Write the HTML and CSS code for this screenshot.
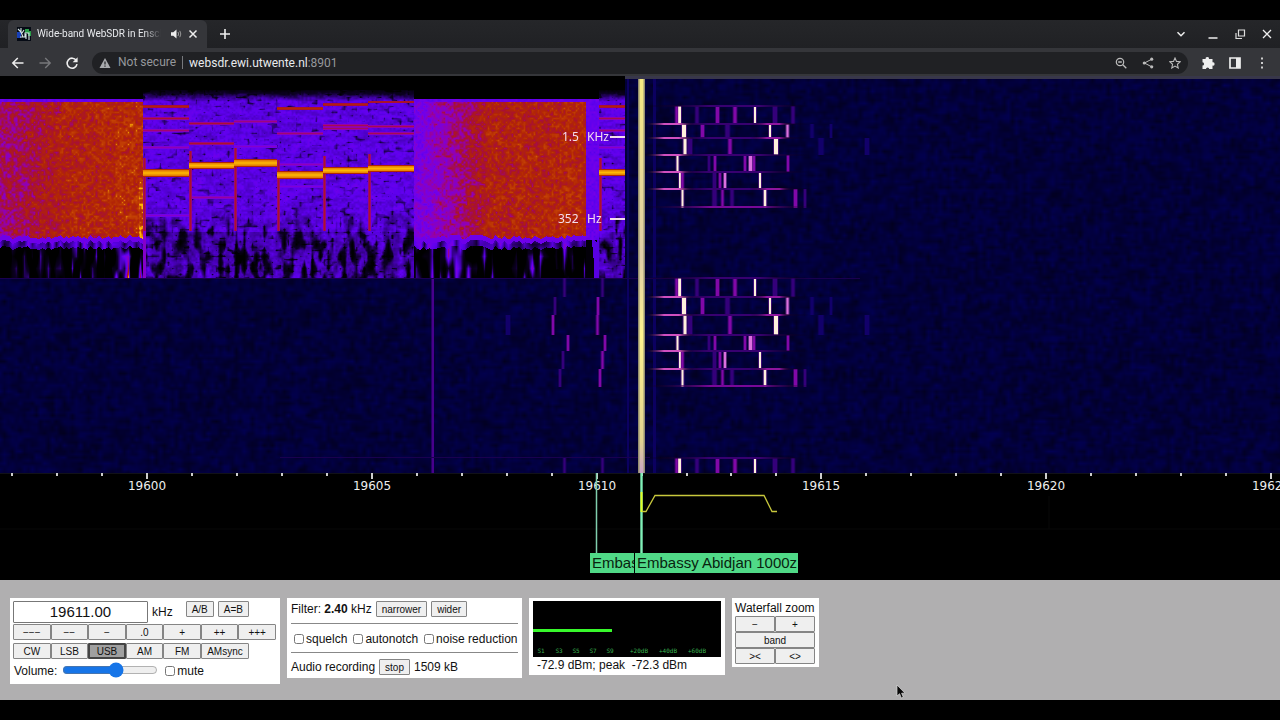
FILE: index.html
```html
<!DOCTYPE html>
<html lang="en">
<head>
<meta charset="utf-8">
<title>Wide-band WebSDR in Enschede</title>
<link rel="stylesheet" href="styles.css">
</head>
<body>
<header class="browser">
  <div class="tabstrip">
    <div class="tab">
      <svg class="favicon" width="14" height="14" viewBox="0 0 14 14"><rect width="14" height="14" fill="#050a14"/><path d="M8 2h4v2h2v5h-3V6H8z" fill="#28a048"/><path d="M0 5h4v6H0z" fill="#1840b8"/><path d="M1 2l3 3 2 5M4 1v5M7 3L5 6M3 10h5V6h4v7M9 7v5" fill="none" stroke="#d8e8e8" stroke-width="1.1"/></svg>
      <span class="tab-title">Wide-band WebSDR in Enschede, the Netherlands</span>
      <svg class="tab-audio" width="12" height="12" viewBox="0 0 12 12"><path d="M1 4.200h2.300L6.500 1.500v9L3.300 7.800H1z" fill="#eee"/><path d="M8 4q1.300 2 0 4M9.800 2.800q2 3.200 0 6.400" fill="none" stroke="#999"/></svg>
      <button class="icon-button" aria-label="Close tab"><svg width="10" height="10" viewBox="0 0 10 10"><path d="M1.500 1.500l7 7m0-7l-7 7" stroke="#eee" stroke-width="1.500"/></svg></button>
    </div>
    <button class="icon-button" aria-label="New tab"><svg width="12" height="12" viewBox="0 0 12 12"><path d="M6 1v10M1 6h10" stroke="#eee" stroke-width="1.600"/></svg></button>
    <div class="window-buttons">
      <button class="icon-button" aria-label="Search tabs"><svg width="12" height="12" viewBox="0 0 12 12"><path d="M2.500 4.200L6 7.700l3.500-3.500" fill="none" stroke="#eee" stroke-width="1.500"/></svg></button>
      <button class="icon-button" aria-label="Minimize"><svg width="12" height="12" viewBox="0 0 12 12"><path d="M1.500 10h9" stroke="#eee" stroke-width="1.500"/></svg></button>
      <button class="icon-button" aria-label="Restore"><svg width="12" height="12" viewBox="0 0 12 12"><path d="M4.500 2h6v6h-6zM2 5v5.500h6" fill="none" stroke="#ddd" stroke-width="1.200"/></svg></button>
      <button class="icon-button" aria-label="Close"><svg width="12" height="12" viewBox="0 0 12 12"><path d="M2 2l8 8m0-8l-8 8" stroke="#eee" stroke-width="1.300"/></svg></button>
    </div>
  </div>
  <div class="toolbar">
    <button class="icon-button" aria-label="Back"><svg width="14" height="14" viewBox="0 0 14 14"><path d="M12.500 7H2M6.800 2L1.800 7l5 5" fill="none" stroke="#eee" stroke-width="1.500"/></svg></button>
    <button class="icon-button" aria-label="Forward"><svg width="14" height="14" viewBox="0 0 14 14"><path d="M1.500 7H12M7.200 2l5 5-5 5" fill="none" stroke="#77787b" stroke-width="1.400"/></svg></button>
    <button class="icon-button" aria-label="Reload"><svg width="14" height="14" viewBox="0 0 14 14"><path d="M11.200 4.300A5 5 0 1 0 12 8.200" fill="none" stroke="#eee" stroke-width="1.600"/><path d="M12.600 1.200v5H7.600z" fill="#eee"/></svg></button>
    <div class="omnibox">
      <svg width="12" height="12" viewBox="0 0 12 12"><path d="M6 1l5.500 10H.5z" fill="#a8aaad"/><path d="M6 4.500v3M6 8.500v1.200" stroke="#202124" stroke-width="1.200"/></svg>
      <span class="insecure">Not secure</span>
      <span class="url">websdr.ewi.utwente.nl<span class="port">:8901</span></span>
      <div class="page-actions">
        <button class="icon-button" aria-label="Zoom"><svg width="12" height="12" viewBox="0 0 12 12"><circle cx="5" cy="5" r="3.700" fill="none" stroke="#bbb" stroke-width="1.200"/><path d="M3.200 5h3.600M7.800 7.800l3.500 3.500" stroke="#bbb" stroke-width="1.300"/></svg></button>
        <button class="icon-button" aria-label="Share"><svg width="12" height="12" viewBox="0 0 12 12"><path d="M10 2L2.500 6 10 10" fill="none" stroke="#bbb"/><circle cx="9.700" cy="2.200" r="1.600" fill="#bbb"/><circle cx="2.300" cy="6" r="1.600" fill="#bbb"/><circle cx="9.700" cy="9.800" r="1.600" fill="#bbb"/></svg></button>
        <button class="icon-button" aria-label="Bookmark"><svg width="12" height="12" viewBox="0 0 12 12"><path d="M6 1l1.500 3.400 3.700.4-2.800 2.500.8 3.700L6 9.100 2.800 11l.8-3.700L.8 4.800l3.700-.4z" fill="none" stroke="#bbb" stroke-width="1.100"/></svg></button>
      </div>
    </div>
    <div class="extensions">
      <button class="icon-button" aria-label="Extensions"><svg width="14" height="14" viewBox="0 0 14 14"><path d="M1.500 3h3.200a1.700 1.700 0 1 1 3.300 0h3.500v3.300a1.700 1.700 0 1 1 0 3.300V13H8.200a1.600 1.600 0 0 0-3.200 0H1.500V9.500a1.600 1.600 0 0 0 0-3.200z" fill="#eee"/></svg></button>
      <button class="icon-button" aria-label="Side panel"><svg width="14" height="14" viewBox="0 0 14 14"><path d="M2 2h10v10H2z" fill="none" stroke="#eee" stroke-width="1.700"/><path d="M8 2h4v10H8z" fill="#eee"/></svg></button>
      <button class="icon-button" aria-label="Menu"><svg width="14" height="14" viewBox="0 0 14 14"><path d="M6 1.500h2v2H6zM6 6h2v2H6zM6 10.500h2v2H6z" fill="#ccc"/></svg></button>
    </div>
  </div>
</header>

<main class="page">
  <section class="waterfall-area">
    <canvas id="waterfall" class="waterfall" height="394"></canvas>
    <div class="spectrogram">
      <canvas id="spectrogram" width="625" height="202"></canvas>
      <div class="marker marker-high"><span>1.5</span><span>KHz</span><i class="dash"></i></div>
      <div class="marker marker-low"><span>352</span><span>Hz</span><i class="dash"></i></div>
    </div>
  </section>

  <section class="scale-area">
    <svg class="scale" width="100%" height="107">
      <path d="M0 .5H4000" stroke="#111118"/>
      <path d="M0 56H4000M1049 23V56" stroke="#090909"/>
      <g id="ticks" stroke="#ccc" stroke-width="2"></g>
      <g id="tick-labels" class="tick-labels"></g>
      <path d="M596.500 0V80" stroke="#80cfae" stroke-width="1.500"/>
      <path d="M641.500 0V80" stroke="#80f0b8" stroke-width="2.400"/>
      <path d="M641.500 19V39" stroke="#e4ff20" stroke-width="2"/>
      <path d="M642 38.500H646L655 22.500H764L772 38.500H777" fill="none" stroke="#c8c83c" stroke-width="1.300"/>
    </svg>
    <a class="station station-first" href="#a">Embas</a>
    <a class="station station-second" href="#b">Embassy Abidjan 1000z</a>
  </section>

  <section class="controls">
    <form class="panel tuning">
      <div class="row freq-row">
        <input id="freq" class="freq" type="text" value="19611.00" aria-label="Frequency">
        <label class="unit" for="freq">kHz</label>
        <button class="btn" type="button">A/B</button>
        <button class="btn" type="button">A=B</button>
      </div>
      <div class="step-row">
        <button class="btn" type="button">−−−</button><button class="btn" type="button">−−</button><button class="btn" type="button">−</button><button class="btn" type="button">.0</button><button class="btn" type="button">+</button><button class="btn" type="button">++</button><button class="btn" type="button">+++</button>
      </div>
      <div class="mode-row">
        <button class="btn" type="button">CW</button><button class="btn" type="button">LSB</button><button class="btn active" type="button">USB</button><button class="btn" type="button">AM</button><button class="btn" type="button">FM</button><button class="btn" type="button">AMsync</button>
      </div>
      <div class="row volume-row">
        <label for="volume">Volume:</label>
        <input id="volume" class="volume" type="range" min="0" max="100" value="57">
        <label class="check"><input type="checkbox">mute</label>
      </div>
    </form>

    <form class="panel filter">
      <div class="row"><span>Filter: <b>2.40</b> kHz</span><button class="btn" type="button">narrower</button><button class="btn" type="button">wider</button></div>
      <hr>
      <div class="row checks">
        <label class="check"><input type="checkbox">squelch</label>
        <label class="check"><input type="checkbox">autonotch</label>
        <label class="check"><input type="checkbox">noise reduction</label>
      </div>
      <hr>
      <div class="row"><span>Audio recording</span><button class="btn" type="button">stop</button><span>1509 kB</span></div>
    </form>

    <div class="panel meter">
      <svg class="meter-scale" viewBox="0 0 188 56">
        <rect width="188" height="56" fill="#000"/>
        <rect y="28" width="79" height="3" fill="#38f82c"/>
        <g class="meter-labels"><text x="8" y="52">S1</text><text x="26" y="52">S3</text><text x="43" y="52">S5</text><text x="60" y="52">S7</text><text x="77" y="52">S9</text><text x="106" y="52">+20dB</text><text x="135" y="52">+40dB</text><text x="164" y="52">+60dB</text></g>
      </svg>
      <div class="reading">-72.9 dBm; peak &nbsp;-72.3 dBm</div>
    </div>

    <div class="panel zoom">
      <div class="zoom-title">Waterfall zoom</div>
      <div class="zoom-grid">
        <button class="btn" type="button">−</button><button class="btn" type="button">+</button>
        <button class="btn wide" type="button">band</button>
        <button class="btn" type="button">&gt;&lt;</button><button class="btn" type="button">&lt;&gt;</button>
      </div>
    </div>
    <svg class="pointer" width="10" height="15" viewBox="0 0 10 15"><path d="M1 1v11l2.600-2.300L5.300 14l2-.8-1.700-4H9z" fill="#080808" stroke="#ddd" stroke-width=".7"/></svg>
  </section>
</main>
<script src="main.js"></script>
</body>
</html>
```
FILE: styles.css
```css
* { box-sizing: border-box; }
body {
  margin: 0;
  min-height: 100vh;
  padding: 20px 0;
  display: flex;
  flex-direction: column;
  background: #000;
  color: #111;
  font: 12px/16px "Liberation Sans", Arial, sans-serif;
}
button, input { font: inherit; color: inherit; margin: 0; }
svg, canvas { display: block; }

.browser { background: #35363a; font-family: Roboto, sans-serif; }
.icon-button { display: flex; padding: 0; border: 0; background: none; }
.tabstrip {
  display: flex;
  align-items: center;
  height: 28px;
  padding-right: 7px;
  background: linear-gradient(#252629, #202124);
}
.tab {
  display: flex;
  align-items: center;
  width: 199px;
  height: 28px;
  margin: 0 12px 0 8px;
  padding: 0 9px;
  border-radius: 6px 6px 0 0;
  background: #35363a;
}
.favicon { flex: none; margin-right: 6px; }
.tab-title {
  width: 124px;
  overflow: hidden;
  white-space: nowrap;
  color: #e8eaed;
  font-size: 10px;
  -webkit-mask-image: linear-gradient(90deg, #000 86%, transparent);
  mask-image: linear-gradient(90deg, #000 86%, transparent);
}
.tab-audio { margin: 0 6px 0 9px; flex: none; }
.window-buttons { display: flex; gap: 18px; margin-left: auto; }
.window-buttons .icon-button:nth-child(1) { margin-right: 2px; }
.window-buttons .icon-button:nth-child(n+3) { margin-left: -3px; }
.toolbar {
  display: flex;
  align-items: center;
  gap: 13px;
  height: 28px;
  padding: 1px 11px 0;
}
.omnibox {
  display: flex;
  align-items: center;
  flex: 1;
  height: 22px;
  padding: 0 7px;
  border-radius: 11px;
  background: #202124;
  font-size: 12px;
}
.insecure {
  margin: 0 6px 0 7px;
  padding-right: 6px;
  border-right: 1px solid #77797d;
  color: #96989c;
  line-height: 13px;
}
.url { color: #e8eaed; }
.port { color: #96989c; }
.page-actions { display: flex; gap: 15px; margin-left: auto; }
.extensions { display: flex; gap: 13px; }

.page { flex: 1; display: flex; flex-direction: column; }
.waterfall-area { position: relative; border-top: 3px solid #38374a; background: #020034; }
.waterfall { width: 100%; height: 394px; }
.spectrogram { position: absolute; left: 0; top: -3px; }
.marker {
  position: absolute;
  right: 0;
  display: flex;
  align-items: center;
  color: #f4dcec;
  font: 12px/16px "Noto Sans", sans-serif;
}
.marker span:first-child { width: 25px; }
.marker span:nth-child(2) { width: 23px; }
.marker-low span:first-child { width: 29px; }
.marker-high { top: 53px; }
.marker-low { top: 135px; }
.dash { width: 15px; height: 2px; background: #f4dcec; }

.scale-area { position: relative; overflow: hidden; background: #000; }
.tick-labels { fill: #eee; font: 12px "DejaVu Sans", sans-serif; text-anchor: middle; }
.station {
  position: absolute;
  top: 80px;
  height: 20px;
  padding: 0 1px 0 2px;
  overflow: hidden;
  background: #50d987;
  color: #08240f;
  font-size: 15px;
  line-height: 20px;
  text-decoration: none;
  white-space: nowrap;
}
.station-first { left: 590px; width: 44px; }
.station-second { left: 635px; }

.controls {
  position: relative;
  flex: 1;
  display: flex;
  flex-wrap: wrap;
  align-items: flex-start;
  align-content: flex-start;
  gap: 7px;
  padding: 18px 10px 10px;
  background: #b0afb0;
}
.panel { padding: 3px; background: #fff; }
.row { display: flex; align-items: center; }
.btn {
  height: 16px;
  padding: 0 5px;
  border: 1px solid #858585;
  border-radius: 1px;
  background: #efefef;
  font-size: 10px;
  line-height: 13px;
}
.btn.active { background: #a0a0a0; border: 2px solid #444; line-height: 11px; padding: 0; }
.tuning { width: 270px; }
.freq-row { align-items: flex-start; gap: 4px; height: 23px; }
.freq {
  width: 135px;
  height: 22px;
  padding: 0 0 1px;
  border: 1px solid #777;
  border-radius: 1px;
  font-size: 15px;
  text-align: center;
}
.unit { margin: 3px 9px 0 0; }
.step-row { display: grid; grid-template-columns: repeat(7, 1fr); margin-right: 1px; }
.mode-row { display: grid; grid-template-columns: repeat(5, 1fr) 48px; margin: 3px 28px 0 0; }
.step-row .btn, .mode-row .btn { padding: 0; }
.volume-row { height: 22px; padding: 1px 0 0 1px; }
.volume { width: 96px; height: 12px; margin: 0 7px 1px 5px; accent-color: #1675e8; }
.check { display: flex; align-items: center; gap: 2px; white-space: nowrap; }
.check input { width: 10px; height: 10px; }

.filter { width: 235px; padding: 3px 4px; }
.filter .row { gap: 4px; height: 16px; }
.filter .checks { gap: 6px; height: 22px; padding-left: 3px; }
.filter hr { height: 1px; margin: 6px 0 4px; border: 0; background: #888; }
.filter .checks + hr { margin: 2px 0 6px; }

.meter { width: 196px; padding: 3px 4px 2px; }
.meter-scale { width: 188px; }
.meter-labels { fill: #38b050; font: 6px "DejaVu Sans Mono", monospace; text-anchor: middle; }
.reading { padding: 0 4px; white-space: nowrap; }

.zoom { width: 87px; padding: 3px; }
.zoom-title { white-space: nowrap; line-height: 15px; }
.zoom-grid { display: grid; grid-template-columns: 1fr 1fr; padding-right: 1px; }
.wide { grid-column: span 2; }
.pointer { position: absolute; left: 896px; top: 104px; }
```
FILE: main.js
```js
// Repeatable hash noise in 0..1.
function hash(x, y, s) {
  let h = Math.imul(x, 374761393) ^ Math.imul(y, 668265263) ^ Math.imul(s, 1442695041);
  h = Math.imul(h ^ (h >>> 13), 1274126177);
  h = Math.imul(h ^ (h >>> 15), 2246822519);
  return ((h ^ (h >>> 16)) >>> 0) / 4294967295;
}
// Smooth noise with separate grain width and height.
function grain(x, y, w, h, s) {
  const gx = x / w, gy = y / h, ix = Math.floor(gx), iy = Math.floor(gy);
  const fx = gx - ix, fy = gy - iy;
  const a = hash(ix, iy, s), b = hash(ix + 1, iy, s), c = hash(ix, iy + 1, s), d = hash(ix + 1, iy + 1, s);
  return (a + (b - a) * fx) * (1 - fy) + (c + (d - c) * fx) * fy;
}
const clamp = v => Math.max(0, Math.min(1, v));

const stops = [[0, 0, 0, 0], [.2, 12, 0, 36], [.4, 66, 0, 170], [.52, 94, 0, 238], [.6, 116, 0, 232],
  [.7, 148, 0, 172], [.78, 168, 16, 50], [.86, 178, 38, 4], [.94, 196, 66, 4], [1, 255, 184, 4]];
function colour(v) {
  v = clamp(v);
  let i = 1;
  while (stops[i][0] < v) i++;
  const a = stops[i - 1], b = stops[i], t = (v - a[0]) / (b[0] - a[0]);
  return [1, 2, 3].map(k => a[k] + (b[k] - a[k]) * t);
}

// Tone bursts: start, end, tone height, fainter harmonics above and below.
const tones = [
  [143, 189, 96.500, [[30, .84], [42, .78], [54, .74], [71, .69], [139, .65]]],
  [189, 234, 89, [[47, .78], [67, .79], [121, .71]]],
  [234, 277, 86.500, [[45, .73], [70, .65]]],
  [277, 323, 98.500, [[32, .86], [57, .74], [88, .68], [110, .63]]],
  [323, 368, 94, [[28, .84], [49, .76], [52, .75]]],
  [368, 414, 92, [[25.500, .82], [50, .76], [57, .76]]],
  [599, 625, 96, [[30, .84], [42, .76], [54, .74], [71, .67]]]
];

function level(x, y) {
  const fine = grain(x, y, 2, 2, 1) - .5;
  const streak = grain(x, y, 4, 12, 2);
  const long = grain(x, y, 4, 40, 3);
  const tone = tones.find(t => x >= t[0] && x < t[1]);
  if (tone) {
    const top = 19;
    if (y < top - 5) return 0;
    let v = .5 + fine * .08 + (grain(x, y, 8, 3, 6) - .5) * .1;
    if (y < top + 6) v -= (top + 6 - y) * .038;
    v -= Math.max(0, grain(x, y, 4, 3, 7) - .68) * .75;
    if (y > 130) v -= Math.min(1, (y - 130) / 40) * Math.max(0, streak * .9 - .38);
    if (y > 155) v -= (1 - long) * .14;
    for (const h of tone[3]) {
      const d = Math.abs(y - h[0]);
      if (d < 1.5) v = Math.max(v, h[1] - d * .06);
    }
    const edge = x - tone[0];
    if (edge < 3 && y > tone[2] - 15 && y < 155) v = Math.max(v, .79 - Math.abs(edge - 1) * .05);
    if (x < 146 && y > 140) v = Math.max(v, .65);
    const dist = Math.abs(y - tone[2]);
    if (dist < 2.6) v = 1 - dist * .012;
    else if (dist < 4) v = .86;
    return v;
  }
  if (x >= 586 && y > 24) return y < 164 ? .55 + fine * .1 : (x > 587 && long > .45 ? .5 : .05);
  const first = x < 143;
  if (y < 23) return 0;
  if (y < 26) return .56 + fine * .1;
  const limit = 163 + grain(x, 0, 3, 1, 9) * 5;
  if (y < limit) {
    const t = first ? x / 143 : (x - 414) / 172;
    let v = first ? .73 + .12 * Math.min(1, t * 2) : .59 + .25 * Math.min(1, t * 2.2);
    v += fine * .14 + (grain(x, y, 4, 4, 8) - .5) * .1;
    if (t > .8) v += .02;
    if (first && x > 138 && y > 105) v += .06;
    if (y > limit - 5) v = .58;
    return v;
  }
  return y < limit + 6 ? .45 * streak + .2 : clamp((streak * .5 + long * .7 - .6) * 1.5 * (first ? .5 + x / 180 : 1));
}

function drawSpectrogram() {
  const c = document.getElementById("spectrogram"), g = c.getContext("2d");
  const im = g.createImageData(c.width, c.height);
  for (let y = 0, i = 0; y < c.height; y++) for (let x = 0; x < c.width; x++, i += 4) {
    const p = colour(level(x, y));
    im.data[i] = p[0]; im.data[i + 1] = p[1]; im.data[i + 2] = p[2]; im.data[i + 3] = 255;
  }
  g.putImageData(im, 0, 0);
}

// Signal traces of each burst: centre, width, brightness class.
const shades = { w: "#fff0dc", p: "#dc70df", m: "#8108a8", d: "#34007a", b: "#12006a" };
const traces = [
  [[679.500, 3, "w"], [676.500, 2, "m"], [697, 3, "d"], [717.500, 3, "m"], [735, 3, "m"], [755, 2, "w"], [775, 4, "d"], [793, 3, "d"], [564.500, 2, "d"], [602.500, 2, "d"]],
  [[684, 4, "w"], [702.500, 3, "m"], [727.500, 4, "d"], [770, 2, "w"], [787.500, 2, "p"], [812, 3, "b"], [831, 2, "b"], [555, 2, "d"], [598, 2, "m"]],
  [[685, 3, "w"], [690, 4, "d"], [730, 3, "m"], [776, 4, "w"], [821, 5, "b"], [867, 4, "b"], [508, 4, "b"], [553, 2, "m"], [597.500, 2, "m"]],
  [[677.500, 2, "w"], [709, 2, "d"], [715, 2, "m"], [745, 2, "m"], [750.500, 3, "p"], [754, 2, "m"], [788, 2, "m"], [568, 2, "m"], [605, 2, "m"]],
  [[680, 2, "w"], [682.500, 2, "m"], [714.500, 3, "d"], [720, 2, "m"], [725, 2, "p"], [760, 2, "w"], [563, 2, "d"], [602.500, 2, "m"]],
  [[682.500, 2, "w"], [714.500, 4, "d"], [722.500, 2, "m"], [732, 3, "d"], [765, 2.500, "w"], [795.500, 3, "m"], [805, 2, "d"], [560, 2, "d"], [600, 2, "m"]]
];
function rule(g, from, to, y, c) {
  const s = g.createLinearGradient(from, 0, to, 0);
  s.addColorStop(0, "transparent"); s.addColorStop(.4, c); s.addColorStop(.7, c); s.addColorStop(1, "transparent");
  g.fillStyle = s; g.fillRect(from, y, to - from, 2);
}
function burst(g, edges) {
  for (let r = 0; r + 1 < edges.length; r++) {
    const y = edges[r], h = edges[r + 1] - y;
    for (const [x, w, k] of traces[r]) {
      g.globalAlpha = .4; g.fillStyle = k === "w" ? "#9020c0" : shades[k];
      g.fillRect(x - w / 2 - 1, y, w + 2, h);
      g.globalAlpha = 1; g.fillStyle = shades[k];
      g.fillRect(x - w / 2, y, w, h);
    }
    rule(g, 642, 810, y - 1, "#380070");
    if (r) rule(g, 644, 694, y - 1, "#d050c0");
    if (r === 1 || r === 2 || r === 5) rule(g, 750, 792, y - 1, "#8e159e");
  }
  if (edges.length > 6) rule(g, 642, 812, edges[6] - 2, "#780898");
}
function drawWaterfall() {
  const c = document.getElementById("waterfall"), g = c.getContext("2d");
  c.width = c.clientWidth;
  const im = g.createImageData(c.width, c.height);
  for (let y = 0, i = 0; y < c.height; y++) for (let x = 0; x < c.width; x++, i += 4) {
    const n = grain(x, y, 4, 6, 21) * .6 + grain(x, y, 9, 3, 22) * .4;
    im.data[i] = 2; im.data[i + 1] = 0; im.data[i + 2] = 30 + n * 54; im.data[i + 3] = 255;
  }
  g.putImageData(im, 0, 0);
  g.fillStyle = "#0b0060";
  g.fillRect(627, 0, 2, 394); g.fillRect(653, 0, 3, 394);
  g.fillStyle = "#48008c"; g.fillRect(431.500, 199, 2.500, 195);
  g.fillStyle = "#1a0050"; g.fillRect(0, 199, 860, 1); g.fillRect(280, 378, 370, 1);
  burst(g, [27, 45, 59, 76, 93, 110, 129]);
  burst(g, [199, 218, 236, 256, 272, 290, 308]);
  burst(g, [379, 394]);
  g.fillStyle = "#938e70"; g.fillRect(638, 0, 7, 394);
  const s = g.createLinearGradient(0, 0, 0, 394);
  s.addColorStop(0, "#f5e981"); s.addColorStop(.45, "#dfcda8"); s.addColorStop(.65, "#fff38e"); s.addColorStop(.92, "#e1d291"); s.addColorStop(1, "#c9a4c9");
  g.fillStyle = s; g.fillRect(639.500, 0, 4, 394);
}

function drawScale() {
  const ns = "http://www.w3.org/2000/svg";
  const ticks = document.getElementById("ticks"), labels = document.getElementById("tick-labels");
  for (let k = -3; k < 80; k++) {
    const x = Math.round(147 + k * 44.96), major = k % 5 === 0;
    const t = document.createElementNS(ns, "path");
    t.setAttribute("d", `M${x} 0v${major ? 6 : 3}`);
    ticks.append(t);
    if (major) {
      const l = document.createElementNS(ns, "text");
      l.setAttribute("x", x); l.setAttribute("y", 17);
      l.textContent = 19600 + k;
      labels.append(l);
    }
  }
}
drawSpectrogram();
drawWaterfall();
drawScale();
window.addEventListener("resize", drawWaterfall);
```
